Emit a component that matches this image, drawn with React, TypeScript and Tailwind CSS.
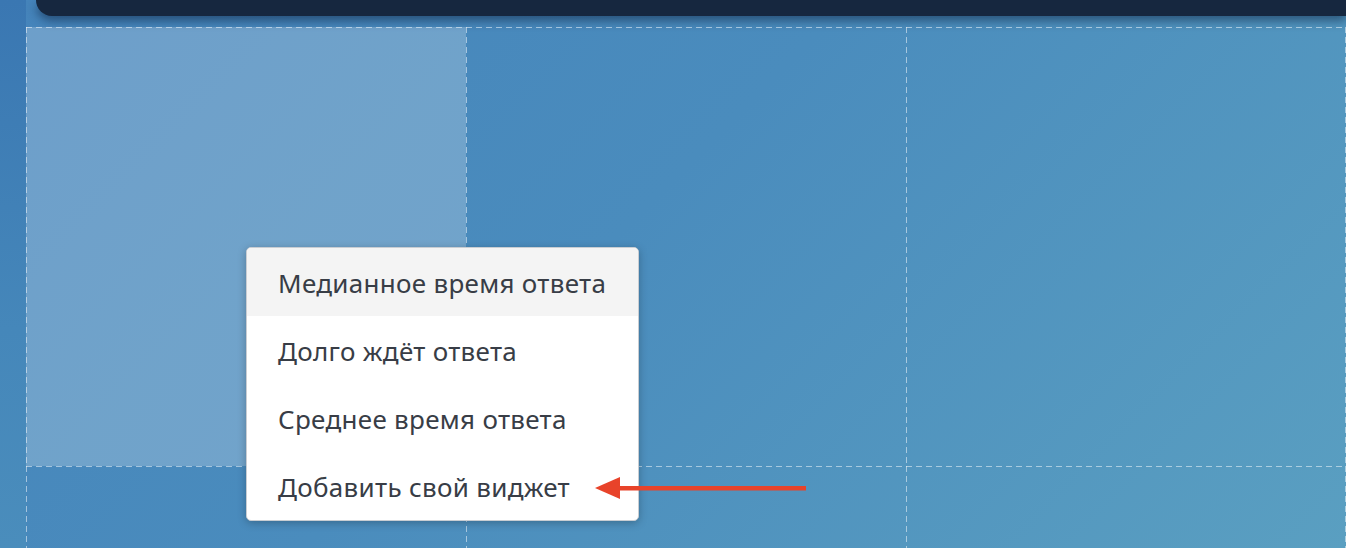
import React from "react";

const items = [
  "Медианное время ответа",
  "Долго ждёт ответа",
  "Среднее время ответа",
  "Добавить свой виджет",
];

const cell =
  "[background-image:linear-gradient(90deg,rgba(255,255,255,0.5)_6px,transparent_6px),linear-gradient(180deg,rgba(255,255,255,0.5)_6px,transparent_6px)] [background-size:10px_1px,1px_10px] [background-position:0_0,0_0] [background-repeat:repeat-x,repeat-y]";
const cellLast =
  "[background-image:linear-gradient(90deg,rgba(255,255,255,0.5)_6px,transparent_6px),linear-gradient(180deg,rgba(255,255,255,0.5)_6px,transparent_6px),linear-gradient(180deg,rgba(255,255,255,0.5)_6px,transparent_6px)] [background-size:10px_1px,1px_10px,1px_10px] [background-position:0_0,0_0,100%_0] [background-repeat:repeat-x,repeat-y,repeat-y]";

export default function App() {
  return (
    <div
      className="relative flex h-[548px] w-full overflow-hidden bg-[linear-gradient(135deg,#4584bb_0%,#4a8cbd_45%,#5a9fc1_100%)]"
      style={{ fontFamily: '"Noto Sans", "Open Sans", sans-serif' }}
    >
      <div className="h-full w-[26px] shrink-0 bg-[linear-gradient(180deg,#3a77b2_0%,#4587ba_60%,#4a8dbc_100%)]" />
      <div className="flex min-w-0 flex-1 flex-col">
        <div className="ml-[10px] h-[16px] shrink-0 rounded-bl-[16px] bg-[#16273f] shadow-[0_5px_10px_rgba(10,30,60,0.5)]" />
        <div className="mt-[11px] grid grid-cols-[repeat(3,440px)] grid-rows-[repeat(2,439px)]">
          <div className={`${cell} bg-white/[0.22]`} />
          <div className={cell} />
          <div className={cellLast} />
          <div className={cell} />
          <div className={cell} />
          <div className={cellLast} />
        </div>
      </div>

      <div className="absolute left-[246px] top-[247px] w-[393px] overflow-hidden rounded-[5px] border border-[#c9cdd2] bg-white shadow-[0_2px_8px_rgba(0,0,0,0.25)]">
        {items.map((t, i) => (
          <div
            key={t}
            className={`flex h-[68px] items-center pl-[31px] pt-[3px] text-[26px] tracking-[0.3px] text-[#383d46] ${
              i === 0 ? "bg-[#f4f4f4]" : ""
            }`}
          >
            {t}
          </div>
        ))}
      </div>

      <svg
        className="absolute left-[594px] top-[476px]"
        width="214"
        height="24"
        viewBox="0 0 214 24"
      >
        <rect x="22" y="10" width="190" height="4.5" fill="#e8432a" />
        <polygon points="1,12 26,1 26,23" fill="#e8432a" />
      </svg>
    </div>
  );
}
